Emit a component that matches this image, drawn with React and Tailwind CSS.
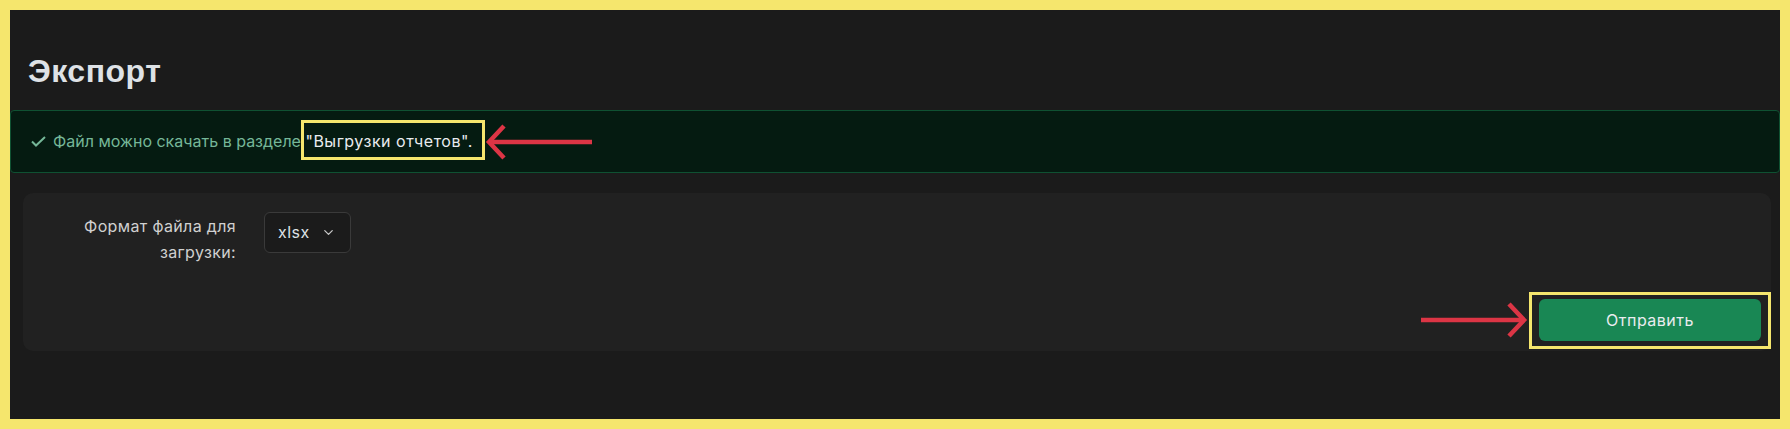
import { ChevronDown } from "lucide-react";

const LeftArrow = () => (
  <svg width="108" height="36" viewBox="0 0 108 36" fill="none">
    <path d="M107 18H4" stroke="#dc3545" strokeWidth="4.5" />
    <path d="M19 2L4 18L19 34" stroke="#dc3545" strokeWidth="4.5" />
  </svg>
);

const RightArrow = () => (
  <svg width="108" height="36" viewBox="0 0 108 36" fill="none">
    <path d="M0 18H103" stroke="#dc3545" strokeWidth="4.5" />
    <path d="M88 2L103 18L88 34" stroke="#dc3545" strokeWidth="4.5" />
  </svg>
);

const App = () => {
  return (
    <div
      className="w-full h-[429px] border-[10px] border-[#f5e66d] bg-[#1b1b1b] flex flex-col"
      style={{ fontFamily: "Inter, 'Noto Sans', sans-serif" }}
    >
      <h1 className="pt-[43px] pl-[18px] text-[32px] leading-[36px] font-bold tracking-[0.5px] text-[#dee2e6] font-['Liberation_Sans',Arial,sans-serif]">
        Экспорт
      </h1>

      {/* success alert */}
      <div className="mt-[21px] h-[63px] flex items-center gap-[7px] pl-[20px] bg-[#051b11] border border-[#0f5132] rounded-[4px] text-[16px] text-[#75b798]">
        <svg width="15" height="11" viewBox="0 0 15 11" fill="none">
          <path d="M1 5.5L5 9.5L14 1" stroke="#75b798" strokeWidth="2" />
        </svg>
        <span className="-mt-[1px]">
          Файл можно скачать в разделе{" "}
          <span className="relative text-[#e9ecef] tracking-[0.5px]">
            "Выгрузки отчетов".
            <span className="absolute -left-[4px] -right-[12px] -top-[11px] -bottom-[9px] border-[3px] border-[#f5e66d]" />
            <span className="absolute -right-[120px] top-[-7px]">
              <LeftArrow />
            </span>
          </span>
        </span>
      </div>

      {/* form card */}
      <div className="mt-[20px] ml-[13px] mr-[9px] h-[158px] bg-[#212121] rounded-[10px] flex flex-col pt-[19px] pl-[20px] pr-[10px] pb-[10px]">
        <div className="flex items-start gap-[28px]">
          <label className="w-[193px] text-right text-[16px] leading-[26px] tracking-[0.35px] text-[#d0d0d0] pt-[1px]">
            Формат файла для загрузки:
          </label>
          <button className="w-[87px] h-[41px] flex items-center justify-between pl-[13px] pr-[14px] bg-[#1b1b1b] border border-[#3a3a3a] rounded-[6px] text-[16px] tracking-[0.5px] text-[#dee2e6]">
            <span className="-mt-[2px]">xlsx</span>
            <ChevronDown size={15} strokeWidth={2} className="text-[#c8c8c8]" />
          </button>
        </div>
        <div className="mt-auto flex justify-end">
          <div className="relative">
            <button className="w-[222px] h-[42px] rounded-[6px] bg-[#198754] text-[16px] tracking-[0.5px] text-[#e9ecef]">
              Отправить
            </button>
            <span className="absolute -left-[10px] -right-[10px] -top-[7px] -bottom-[8px] border-[3px] border-[#f5e66d]" />
            <span className="absolute -left-[118px] top-[3px]">
              <RightArrow />
            </span>
          </div>
        </div>
      </div>
    </div>
  );
};

export default App;
